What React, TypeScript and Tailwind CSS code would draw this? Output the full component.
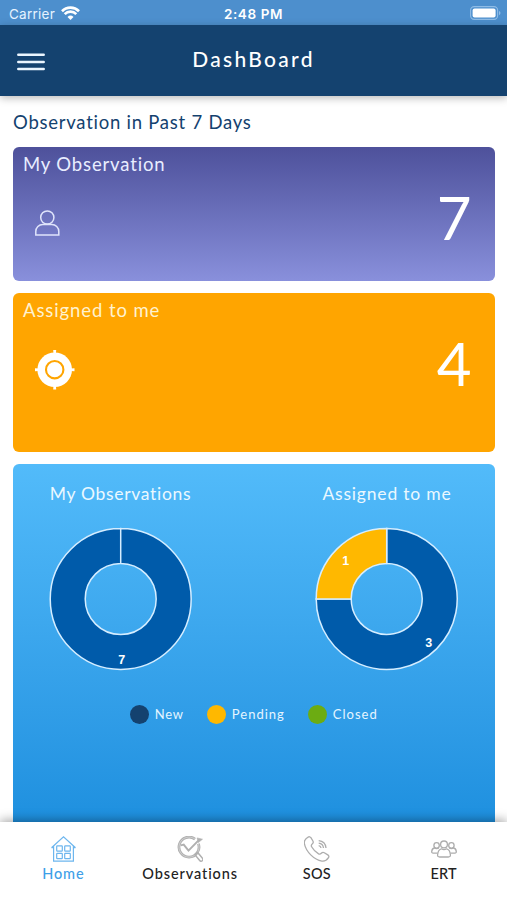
import type { ReactNode } from "react";

// Types
type Slice = {
  value: number;
  color: string;
  labelX: number;
  labelY: number;
};

type StatCardProps = {
  title: string;
  titleClass: string;
  value: number;
  className: string;
  children: ReactNode;
};

const mySlices: Slice[] = [{ value: 7, color: "#005baa", labelX: 73, labelY: 137 }];

const assignedSlices: Slice[] = [
  { value: 3, color: "#005baa", labelX: 114, labelY: 120 },
  { value: 1, color: "#ffb800", labelX: 31, labelY: 38 },
];

const OUTER = 70.5;
const INNER = 35.5;
const CENTER = 72;

const point = (radius: number, turn: number) => {
  const angle = turn * Math.PI * 2 - Math.PI / 2;
  return `${CENTER + radius * Math.cos(angle)} ${CENTER + radius * Math.sin(angle)}`;
};

const slicePath = (from: number, to: number) => {
  const mid = (from + to) / 2;
  return [
    `M${point(OUTER, from)}`,
    `A${OUTER} ${OUTER} 0 0 1 ${point(OUTER, mid)}`,
    `A${OUTER} ${OUTER} 0 0 1 ${point(OUTER, to)}`,
    `L${point(INNER, to)}`,
    `A${INNER} ${INNER} 0 0 0 ${point(INNER, mid)}`,
    `A${INNER} ${INNER} 0 0 0 ${point(INNER, from)}Z`,
  ].join(" ");
};

const Donut = ({ slices }: { slices: Slice[] }) => {
  const total = slices.reduce((sum, s) => sum + s.value, 0);
  let start = 0;

  return (
    <svg width="144" height="144" viewBox="0.3 0 144 144">
      {slices.map((slice) => {
        const from = start;
        start += slice.value / total;
        return (
          <path
            key={slice.color}
            d={slicePath(from, start)}
            fill={slice.color}
            stroke="#d5edff"
            strokeWidth="1.5"
          />
        );
      })}
      {slices.map((slice) => (
        <text
          key={slice.color}
          x={slice.labelX}
          y={slice.labelY}
          textAnchor="middle"
          fill="#fff"
          className="font-['Liberation_Sans',sans-serif] text-[12.5px] font-bold"
        >
          {slice.value}
        </text>
      ))}
    </svg>
  );
};

const StatusBar = () => (
  <div className="grid h-[25px] shrink-0 grid-cols-3 items-center bg-[#4d8fcd] pt-[3px] text-white font-[Inter,sans-serif]">
    <div className="flex items-center gap-1.5 pl-[9px]">
      <span className="text-[13.5px] leading-5 tracking-[0.25px] text-[#e6f3ff]">Carrier</span>
      <svg width="19" height="14" viewBox="0 0 19 14" className="mb-0.5">
        <path d="M9.5 14 6.5 11a4.3 4.3 0 0 1 6 0z" fill="#fff" />
        <path d="M3.7 8.1a8.2 8.2 0 0 1 11.6 0" fill="none" stroke="#fff" strokeWidth="2.7" />
        <path d="M1 5.2a12.1 12.1 0 0 1 17 0" fill="none" stroke="#fff" strokeWidth="2.7" />
      </svg>
    </div>
    <div className="text-center text-[13.5px] leading-5 font-semibold tracking-[0.6px]">2:48 PM</div>
    <div className="flex justify-end pr-[6px]">
      <svg width="31" height="14" viewBox="0 0 31 14" className="mb-0.5">
        <rect x="0.6" y="0.6" width="27" height="12.8" rx="3.6" fill="none" stroke="#8fbce6" strokeWidth="1.1" />
        <rect x="2.6" y="2.4" width="23" height="9.2" rx="2" fill="#fff" />
        <path d="M29 5v4.2q1.5-.6 1.5-2.1T29 5z" fill="#8fbce6" />
      </svg>
    </div>
  </div>
);

const MenuIcon = () => (
  <svg width="28" height="20" viewBox="0 0 28 20" stroke="#eaf5ff" strokeWidth="2.5" strokeLinecap="round">
    <path d="M1.3 2.7h25.4M1.3 9.9h25.4M1.3 17.1h25.4" />
  </svg>
);

const StatCard = ({ title, titleClass, value, className, children }: StatCardProps) => (
  <div className={`flex flex-col rounded-[6px] pr-[23px] pl-[10px] pt-[5px] text-white ${className}`}>
    <h2 className={`text-[18.5px] leading-6 whitespace-nowrap ${titleClass}`}>{title}</h2>
    <div className="flex items-start justify-between pt-[11px] pl-[12px]">
      <div className="pt-[17px]">{children}</div>
      <span className="text-[60px] leading-[60px]">{value}</span>
    </div>
  </div>
);

const UserIcon = () => (
  <svg width="25" height="26" viewBox="0 0 25 26" fill="none" stroke="#dfe4fb" strokeWidth="1.5" className="mt-[6px]">
    <circle cx="12.3" cy="7.5" r="6.6" />
    <path d="M.8 24.9v-3.4a7 7 0 0 1 7-7h9a7 7 0 0 1 7 7v3.4z" />
  </svg>
);

const TargetIcon = () => (
  <svg width="40" height="40" viewBox="0 0 40 40">
    <path d="M18.2 0h3l-.3 4h-2.4zM18.2 39.5h3l-.3-4h-2.4zM0 18.3v3l4-.3v-2.4zM39.5 18.3v3l-4-.3v-2.4z" fill="#fff" />
    <circle cx="19.7" cy="19.7" r="17.3" fill="#fff" />
    <circle cx="19.7" cy="19.7" r="8.7" fill="none" stroke="#ffa500" strokeWidth="2.1" />
  </svg>
);

const HomeIcon = () => (
  <svg width="26" height="26" viewBox="-0.5 0 26 26" fill="none" stroke="#6db6ee" strokeWidth="1.2">
    <path d="M1 11.7 13 .9l12 10.8M1 11.7h2.1M22.9 11.7H25M3.1 10v15.1h19.8V10" />
    <rect x="6.2" y="9.8" width="5.6" height="5.4" rx=".6" />
    <rect x="14.2" y="9.8" width="5.6" height="5.4" rx=".6" />
    <rect x="6.2" y="17.3" width="5.6" height="5.4" rx=".6" />
    <rect x="14.2" y="17.3" width="5.6" height="5.4" rx=".6" />
  </svg>
);

const SearchIcon = () => (
  <svg width="26" height="26" viewBox="-0.5 0 26 26" fill="none" stroke="#b0b0b0">
    <path d="M17.5 3.1a10 10 0 1 0 3.4 4.6" strokeWidth="2.8" />
    <path d="M17.5 3.1a10 10 0 1 0 3.4 4.6" stroke="#d6d6d6" strokeWidth=".8" />
    <path d="m3.2 9.4 3-.8 4.8 6 9.8-10" strokeWidth="2" />
    <path d="m19.6 1.9 5.4 1.3-4.2 3.4z" fill="#b0b0b0" strokeWidth=".6" />
    <path d="m17.4 18.6 2.7-2.2 4.9 5.8a1.8 1.8 0 0 1-2.8 2.3z" strokeWidth="1.5" />
  </svg>
);

const PhoneIcon = () => (
  <svg width="26" height="26" viewBox="0.5 0 26 26" fill="none" stroke="#adadad" strokeWidth="1.3" strokeLinejoin="round">
    <path d="M4.6 1.1c1-.7 2.1-.4 2.8.6l2 3.3c.6 1 .4 2-.5 2.8-1.3 1.1-1.5 1.700-.8 3 1.700 3 3.900 5.300 7 7.100 1.100.6 1.800.4 2.700-.6.9-1 1.900-1.300 3-.6l3.500 2.200c1.100.7 1.400 1.800.7 2.800-1.400 2.200-3.800 3.800-6.600 3.400C10.700 23.900 2.200 15.500.9 7.500.5 4.900 2.200 2.500 4.600 1.100z" />
    <path d="M15.200 9.700q2 .3 2.300 2.300M15.200 7.200q4.300.5 4.800 4.800M15.200 4.700q6.700.6 7.300 7.300" />
  </svg>
);

const TeamIcon = () => (
  <svg width="26" height="26" viewBox="0 0 26 26" fill="none" stroke="#adadad" strokeWidth="1.3" strokeLinejoin="round">
    <circle cx="13" cy="8.4" r="3.4" />
    <circle cx="5.6" cy="9.4" r="2.7" />
    <circle cx="20.4" cy="9.4" r="2.7" />
    <path d="M8.700 21c-1.600 0-2.300-.8-2.100-2.200.3-3.400 1.400-5.600 3.900-6 1.700 1.100 3.300 1.100 5 0 2.500.4 3.600 2.600 3.900 6 .2 1.400-.5 2.200-2.100 2.200z" />
    <path d="M6.500 17.100H2.100c-1 0-1.500-.6-1.400-1.500.2-2 .9-3.200 2.600-3.600 1.500.9 3 .9 4.500 0M19.500 17.100h4.400c1 0 1.500-.6 1.400-1.500-.2-2-.9-3.200-2.600-3.600-1.500.9-3 .9-4.500 0" />
  </svg>
);

const legend = [
  { label: "New", dot: "bg-[#14426f]", tracking: "tracking-[0.8px]" },
  { label: "Pending", dot: "bg-[#ffb800]", tracking: "tracking-[1px]" },
  { label: "Closed", dot: "bg-[#6cac12]", tracking: "tracking-[1px]" },
];

const tabs = [
  { label: "Home", icon: <HomeIcon />, text: "text-[#3e9fe8] tracking-[0.85px]" },
  { label: "Observations", icon: <SearchIcon />, text: "text-[#222] tracking-[0.9px]" },
  { label: "SOS", icon: <PhoneIcon />, text: "text-[#222] tracking-[0.3px]" },
  { label: "ERT", icon: <TeamIcon />, text: "text-[#222] tracking-[0.1px]" },
];

const App = () => {
  return (
    <div className="flex h-[900px] w-[507px] flex-col overflow-hidden bg-white font-[Lato,sans-serif]">
      <StatusBar />
      <header className="grid h-[71px] shrink-0 grid-cols-3 items-center bg-[#14426f] shadow-[0_2px_8px_rgba(0,0,0,0.28)]">
        <button className="ml-[17px] w-7 pt-[2px]" aria-label="Menu">
          <MenuIcon />
        </button>
        <h1 className="mb-[3px] text-center text-[21px] leading-6 font-medium tracking-[2.3px] whitespace-nowrap text-white">
          DashBoard
        </h1>
      </header>

      <main className="flex min-h-0 flex-1 flex-col px-[13px] pt-[14px]">
        <p className="pb-[12.5px] text-[18.5px] leading-6 tracking-[0.75px] whitespace-nowrap text-[#14426f]">
          Observation in Past 7 Days
        </p>

        <StatCard
          title="My Observation"
          titleClass="tracking-[0.85px] text-[#e8edff]"
          value={7}
          className="h-[134px] w-[481.5px] shrink-0 bg-linear-to-b from-[#4e519b] to-[#8990dc]"
        >
          <UserIcon />
        </StatCard>

        <StatCard
          title="Assigned to me"
          titleClass="tracking-[0.9px] text-[#fff2cf]"
          value={4}
          className="mt-[12.5px] h-[158.5px] w-[481.5px] shrink-0 bg-[#ffa500]"
        >
          <TargetIcon />
        </StatCard>

        <section className="mt-[12.5px] flex min-h-0 w-[481.5px] flex-1 flex-col rounded-t-[6px] bg-linear-to-b from-[#52bbfa] to-[#1e90df] pt-[18px]">
          <div className="flex justify-between px-[35.5px]">
            <div className="flex w-[144px] flex-col items-center gap-[21px]">
              <h3 className="text-[17.5px] leading-6 tracking-[0.7px] whitespace-nowrap text-[#ebf8ff]">My Observations</h3>
              <Donut slices={mySlices} />
            </div>
            <div className="flex w-[144px] flex-col items-center gap-[21px]">
              <h3 className="text-[17.5px] leading-6 tracking-[0.8px] whitespace-nowrap text-[#ebf8ff]">Assigned to me</h3>
              <Donut slices={assignedSlices} />
            </div>
          </div>
          <div className="flex justify-center gap-[23px] pt-[33px]">
            {legend.map((item) => (
              <div key={item.label} className="flex items-center gap-[6px]">
                <span className={`size-[19px] rounded-full ${item.dot}`} />
                <span className={`text-[13px] leading-5 text-[#e5f5ff] ${item.tracking}`}>{item.label}</span>
              </div>
            ))}
          </div>
        </section>
      </main>

      <nav className="relative grid h-[78px] shrink-0 grid-cols-4 bg-white shadow-[0_-2px_10px_rgba(0,0,0,0.35)]">
        {tabs.map((tab) => (
          <button key={tab.label} className="flex flex-col items-center pt-[14px]">
            {tab.icon}
            <span className={`mt-[2px] text-[14.5px] leading-5 font-medium ${tab.text}`}>{tab.label}</span>
          </button>
        ))}
      </nav>
    </div>
  );
};

export default App;
